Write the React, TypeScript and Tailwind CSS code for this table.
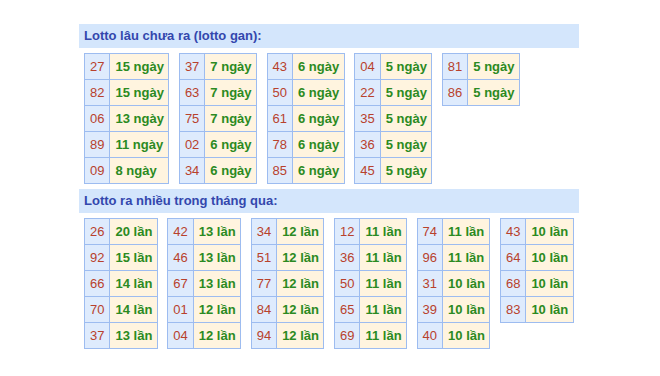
const gan: [string, string][][] = [
  [["27", "15 ngày"], ["82", "15 ngày"], ["06", "13 ngày"], ["89", "11 ngày"], ["09", "8 ngày"]],
  [["37", "7 ngày"], ["63", "7 ngày"], ["75", "7 ngày"], ["02", "6 ngày"], ["34", "6 ngày"]],
  [["43", "6 ngày"], ["50", "6 ngày"], ["61", "6 ngày"], ["78", "6 ngày"], ["85", "6 ngày"]],
  [["04", "5 ngày"], ["22", "5 ngày"], ["35", "5 ngày"], ["36", "5 ngày"], ["45", "5 ngày"]],
  [["81", "5 ngày"], ["86", "5 ngày"]],
];

const nhieu: [string, string][][] = [
  [["26", "20 lần"], ["92", "15 lần"], ["66", "14 lần"], ["70", "14 lần"], ["37", "13 lần"]],
  [["42", "13 lần"], ["46", "13 lần"], ["67", "13 lần"], ["01", "12 lần"], ["04", "12 lần"]],
  [["34", "12 lần"], ["51", "12 lần"], ["77", "12 lần"], ["84", "12 lần"], ["94", "12 lần"]],
  [["12", "11 lần"], ["36", "11 lần"], ["50", "11 lần"], ["65", "11 lần"], ["69", "11 lần"]],
  [["74", "11 lần"], ["96", "11 lần"], ["31", "10 lần"], ["39", "10 lần"], ["40", "10 lần"]],
  [["43", "10 lần"], ["64", "10 lần"], ["68", "10 lần"], ["83", "10 lần"]],
];

const CountTable = ({ rows }: { rows: [string, string][] }) => (
  <table className="border-collapse border border-[#93b6f2]">
    <tbody>
      {rows.map(([num, val]) => (
        <tr key={num} className="h-[26px]">
          <td className="border border-[#9dbcf0] bg-[#deebfd] px-[5px] text-[13px] text-[#b8412c] leading-none">
            {num}
          </td>
          <td className="border border-[#9dbcf0] bg-[#fff4df] pl-[5px] pr-[4.5px] text-[13px] font-bold text-[#2b8a22] leading-none whitespace-nowrap">
            {val}
          </td>
        </tr>
      ))}
    </tbody>
  </table>
);

const Section = ({ title, tables }: { title: string; tables: [string, string][][] }) => (
  <div>
    <div className="h-[24px] bg-[#d4e6fc] pl-[5px] flex items-center text-[13px] font-bold text-[#3347ad]">
      {title}
    </div>
    <div className="flex items-start pl-[5px] pt-[5px] gap-[9.5px]">
      {tables.map((t, i) => (
        <CountTable key={i} rows={t} />
      ))}
    </div>
  </div>
);

export default function App() {
  return (
    <div className="w-[660px] h-[376px] bg-white pt-[24px] font-['Liberation_Sans',Arial,sans-serif]">
      <div className="ml-[79px] w-[500px] flex flex-col gap-[5px]">
        <Section title="Lotto lâu chưa ra (lotto gan):" tables={gan} />
        <Section title="Lotto ra nhiều trong tháng qua:" tables={nhieu} />
      </div>
    </div>
  );
}
